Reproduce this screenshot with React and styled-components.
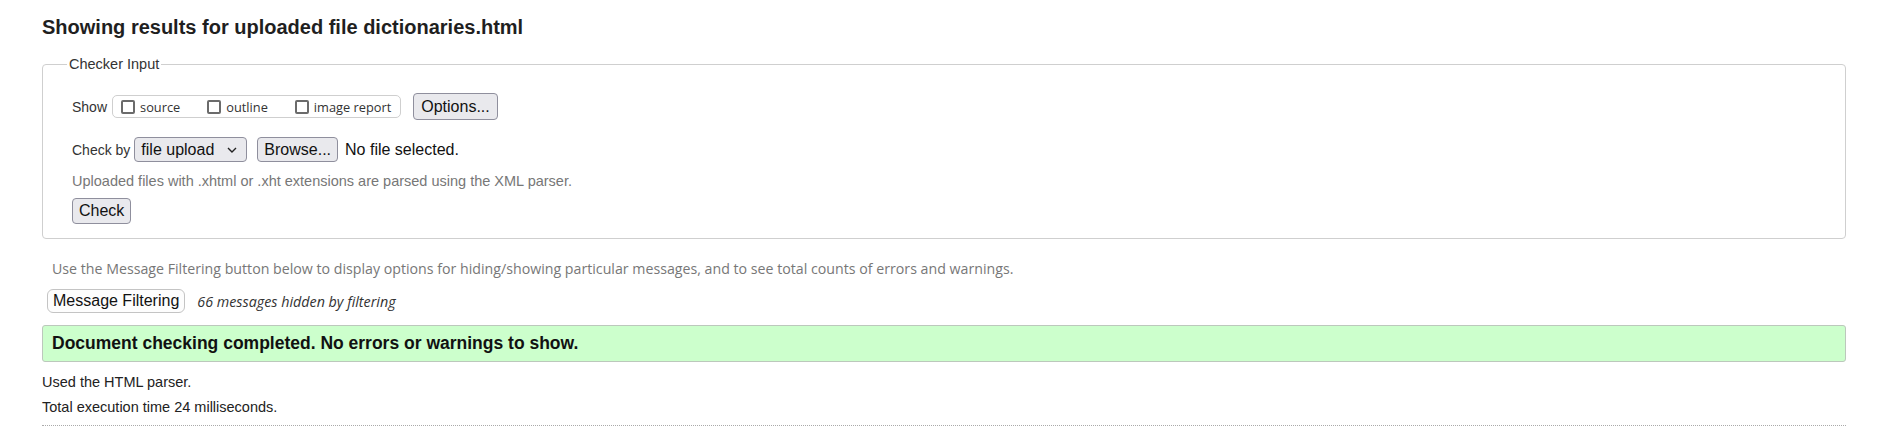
import React from "react";
import styled, { createGlobalStyle } from "styled-components";

const Global = createGlobalStyle`
  body {
    margin: 0;
    background: #fff;
    color: #222;
    font: 14px "Liberation Sans", Arial, sans-serif;
  }
`;

const Page = styled.div`
  padding: 16px 58px 0 42px;
`;

const Title = styled.h2`
  margin: 0;
  font-size: 20px;
  line-height: 23px;
  font-weight: 700;
  color: #1f1f1f;
`;

const InputSet = styled.fieldset`
  margin: 17px 0 0;
  padding: 0 28px 14px 29px;
  border: 1px solid #cfcfcf;
  border-radius: 4px;
  min-inline-size: 0;
`;

const Legend = styled.legend`
  margin-left: -5px;
  padding: 0 2px;
  font-size: 14.5px;
  line-height: 16px;
  color: #333;
`;

const FieldRow = styled.div`
  display: flex;
  align-items: center;
  margin-top: ${p => p.$top}px;
`;

const Label = styled.span`
  font-size: 14px;
  color: #333;
  margin-right: ${p => p.$gap}px;
`;

const OptionGroup = styled.div`
  display: flex;
  align-items: center;
  height: 21px;
  padding: 0 9px 0 8px;
  border: 1px solid #cfcfcf;
  border-radius: 5px;
  margin-right: 12px;
`;

const OptionItem = styled.label`
  display: flex;
  align-items: center;
  gap: 5px;
  margin-right: ${p => (p.$last ? 0 : 27)}px;
  font: 12.8px "Open Sans", "Liberation Sans", sans-serif;
  color: #333;
`;

const Box = styled.input`
  appearance: none;
  margin: 0;
  width: 14px;
  height: 14px;
  border: 2px solid #6b6b6b;
  border-radius: 2px;
  background: #fff;
  box-sizing: border-box;
`;

const Btn = styled.button`
  box-sizing: border-box;
  height: ${p => p.$h}px;
  padding: 0 ${p => p.$pad}px;
  margin-right: ${p => p.$gap || 0}px;
  font: 16px "Liberation Sans", Arial, sans-serif;
  color: #111;
  background: ${p => (p.$plain ? "#fdfdfd" : "#e9e9ed")};
  border: 1px solid ${p => (p.$plain ? "#c4c4c4" : "#8f8f9d")};
  border-radius: ${p => (p.$plain ? 6 : 4)}px;
`;

const SelectWrap = styled.div`
  position: relative;
  display: inline-flex;
  margin-right: 10px;
`;

const Select = styled.select`
  appearance: none;
  box-sizing: border-box;
  width: 113px;
  height: 25px;
  padding: 0 0 0 6px;
  font: 16px "Liberation Sans", Arial, sans-serif;
  color: #111;
  background: #e9e9ed;
  border: 1px solid #8f8f9d;
  border-radius: 4px;
`;

const Chevron = styled.svg`
  position: absolute;
  right: 10px;
  top: 10px;
  pointer-events: none;
`;

const FileNote = styled.span`
  margin-left: 7px;
  font-size: 16px;
  color: #111;
`;

const Hint = styled.div`
  margin-top: 11px;
  font-size: 14.5px;
  line-height: 16px;
  color: #777;
`;

const FilterHint = styled.div`
  margin: 21px 0 0 10px;
  font: 14.2px/18px "Open Sans", "Liberation Sans", sans-serif;
  color: #777;
`;

const FilterRow = styled.div`
  display: flex;
  align-items: center;
  margin: 11px 0 0 5px;
`;

const HiddenCount = styled.span`
  margin-left: 12px;
  font: italic 14.3px "Open Sans", "Liberation Sans", sans-serif;
  color: #333;
`;

const Success = styled.div`
  margin-top: 12px;
  padding: 0 9px;
  height: 35px;
  line-height: 35px;
  background: #ccffcc;
  border: 1px solid #bcc8bc;
  border-radius: 3px;
  font-size: 17.5px;
  font-weight: 700;
  color: #111;
`;

const Stat = styled.p`
  margin: ${p => p.$top}px 0 0;
  font-size: 14.5px;
  line-height: 16px;
  color: #222;
`;

const Rule = styled.hr`
  margin: 10px 0 0;
  border: 0;
  border-top: 1px dotted #aaa;
`;

const options = ["source", "outline", "image report"];

export default function App() {
  return (
    <Page>
      <Global />
      <Title>Showing results for uploaded file dictionaries.html</Title>
      <InputSet>
        <Legend>Checker Input</Legend>
        <FieldRow $top={21}>
          <Label $gap={5}>Show</Label>
          <OptionGroup>
            {options.map((o, i) => (
              <OptionItem key={o} $last={i === options.length - 1}>
                <Box type="checkbox" />
                {o}
              </OptionItem>
            ))}
          </OptionGroup>
          <Btn $h={27} $pad={7}>Options...</Btn>
        </FieldRow>
        <FieldRow $top={17}>
          <Label $gap={4}>Check by</Label>
          <SelectWrap>
            <Select defaultValue="file">
              <option value="file">file upload</option>
            </Select>
            <Chevron width="10" height="6" viewBox="0 0 10 6">
              <path d="M1 1l4 4 4-4" fill="none" stroke="#222" strokeWidth="1.4" />
            </Chevron>
          </SelectWrap>
          <Btn $h={25} $pad={6}>Browse...</Btn>
          <FileNote>No file selected.</FileNote>
        </FieldRow>
        <Hint>Uploaded files with .xhtml or .xht extensions are parsed using the XML parser.</Hint>
        <FieldRow $top={9}>
          <Btn $h={26} $pad={6}>Check</Btn>
        </FieldRow>
      </InputSet>
      <FilterHint>
        Use the Message Filtering button below to display options for hiding/showing particular messages, and to see total counts of errors and warnings.
      </FilterHint>
      <FilterRow>
        <Btn $plain $h={24} $pad={5}>Message Filtering</Btn>
        <HiddenCount>66 messages hidden by filtering</HiddenCount>
      </FilterRow>
      <Success>Document checking completed. No errors or warnings to show.</Success>
      <Stat $top={12}>Used the HTML parser.</Stat>
      <Stat $top={9}>Total execution time 24 milliseconds.</Stat>
      <Rule />
    </Page>
  );
}
